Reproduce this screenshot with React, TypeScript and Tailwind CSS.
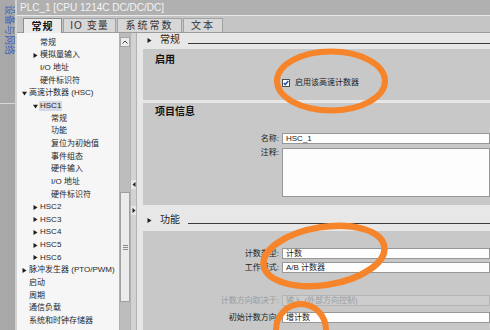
import type { ReactNode } from 'react'

type TreeItem = { label: string; level: 0 | 1 | 2; arrow?: 'right' | 'down'; selected?: boolean }

const treeItems: TreeItem[] = [
  { label: '常规', level: 1 },
  { label: '模拟量输入', level: 1, arrow: 'right' },
  { label: 'I/O 地址', level: 1 },
  { label: '硬件标识符', level: 1 },
  { label: '高速计数器 (HSC)', level: 0, arrow: 'down' },
  { label: 'HSC1', level: 1, arrow: 'down', selected: true },
  { label: '常规', level: 2 },
  { label: '功能', level: 2 },
  { label: '复位为初始值', level: 2 },
  { label: '事件组态', level: 2 },
  { label: '硬件输入', level: 2 },
  { label: 'I/O 地址', level: 2 },
  { label: '硬件标识符', level: 2 },
  { label: 'HSC2', level: 1, arrow: 'right' },
  { label: 'HSC3', level: 1, arrow: 'right' },
  { label: 'HSC4', level: 1, arrow: 'right' },
  { label: 'HSC5', level: 1, arrow: 'right' },
  { label: 'HSC6', level: 1, arrow: 'right' },
  { label: '脉冲发生器 (PTO/PWM)', level: 0, arrow: 'right' },
  { label: '启动', level: 0 },
  { label: '周期', level: 0 },
  { label: '通信负载', level: 0 },
  { label: '系统和时钟存储器', level: 0 },
]

const levelPad = ['pl-[5px]', 'pl-[16px]', 'pl-[27px]']

function Arrow({ dir }: { dir: 'right' | 'down' }) {
  return (
    <svg width="5" height="5" viewBox="0 0 5 5">
      {dir === 'right'
        ? <polygon points="0.5,0 4.5,2.5 0.5,5" fill="#1e1e1e" />
        : <polygon points="0,0.8 5,0.8 2.5,4.5" fill="#1e1e1e" />}
    </svg>
  )
}

function Input({ children, disabled, className = '' }: { children?: ReactNode; disabled?: boolean; className?: string }) {
  return (
    <div
      className={`ml-[3px] flex-1 border pl-[3px] text-[8px] leading-[9px] ${
        disabled ? 'border-[#b4b4b4] bg-[#cdcdcd] text-[#9c9c9c]' : 'border-[#979797] bg-[#fdfdfd] text-[#1c1c1c]'
      } ${className}`}
    >
      {children}
    </div>
  )
}

function Field({ label, value, disabled }: { label: string; value: string; disabled?: boolean }) {
  return (
    <div className="flex items-center">
      <div className={`w-[136px] shrink-0 text-right text-[8px] leading-[10px] ${disabled ? 'text-[#9c9c9c]' : 'text-[#1c1c1c]'}`}>
        {label}
      </div>
      <Input disabled={disabled} className="h-[11px]">{value}</Input>
    </div>
  )
}

function SectionHeader({ title, className }: { title: string; className: string }) {
  return (
    <div className={`flex items-center pl-[10px] ${className}`}>
      <span className="flex w-[13px] items-center"><Arrow dir="right" /></span>
      <span className="text-[10px] leading-[12px] text-[#1c1c1c]">{title}</span>
      <div className="ml-[8px] mt-[6px] h-px flex-1 bg-[#3a3a3a]" />
    </div>
  )
}

export default function App() {
  return (
    <div className="relative flex h-[330px] w-[490px] overflow-hidden bg-[#e6e6e6] font-['Liberation_Sans','Noto_Sans_CJK_SC',sans-serif]">
      {/* left collapsed portal strip */}
      <div className="flex w-[17px] shrink-0 flex-col border-r-2 border-[#d3d3d3] bg-[#a8a8a8]">
        <div className="mt-[5px] flex justify-center text-[10px] leading-[12px] text-[#3d63b8] [writing-mode:vertical-rl] [text-orientation:sideways]">
          设备与网络
        </div>
        <div className="mt-[48px] h-px bg-[#d6d6d6]" />
      </div>

      <div className="flex min-w-0 flex-1 flex-col">
        <div className="h-[15px] shrink-0 bg-[#b0b0b0] pl-[3px] text-[10px] leading-[15px] text-[#f4f4f4]">
          PLC_1 [CPU 1214C DC/DC/DC]
        </div>

        <div className="flex h-[18px] shrink-0 items-end gap-[1px] border-y border-t-[#e9e9e9] border-b-[#9b9b9b] bg-[#c5c5c5] pl-[6px]">
          <div className="-mb-px flex h-[15px] w-[39px] items-center justify-center border border-b-0 border-[#8c8c8c] bg-[#ececec] text-[10px] font-bold tracking-[1px] text-[#111]">
            常规
          </div>
          <div className="flex h-[14px] w-[53px] items-center justify-center border border-b-0 border-[#a2a2a2] bg-[#d7d7d7] text-[10px] tracking-[1px] text-[#333]">
            IO 变量
          </div>
          <div className="flex h-[14px] w-[65px] items-center justify-center border border-b-0 border-[#a2a2a2] bg-[#d7d7d7] text-[10px] tracking-[2px] text-[#333]">
            系统常数
          </div>
          <div className="flex h-[14px] w-[40px] items-center justify-center border border-b-0 border-[#a2a2a2] bg-[#d7d7d7] text-[10px] tracking-[2px] text-[#333]">
            文本
          </div>
        </div>

        <div className="flex min-h-0 flex-1">
          {/* navigation tree */}
          <div className="w-[102px] shrink-0 overflow-hidden bg-[#f6f6f6] pt-[3.5px] text-[8px] leading-none text-[#262626]">
            {treeItems.map((item, i) => (
              <div key={i} className={`flex h-[12.65px] items-center whitespace-nowrap ${levelPad[item.level]}`}>
                <span className="flex w-[7px] items-center">{item.arrow && <Arrow dir={item.arrow} />}</span>
                <span className={item.selected ? '-ml-[1px] bg-[#d3d9e9] px-[1px] py-[1px]' : ''}>{item.label}</span>
              </div>
            ))}
          </div>

          {/* scrollbar */}
          <div className="flex w-[11px] shrink-0 flex-col border-l border-[#b0b0b0] bg-[#bdbdbd]">
            <div className="mt-[4px] flex h-[10px] items-center justify-center border border-[#a6a6a6] bg-[#ececec]">
              <svg width="6" height="4" viewBox="0 0 6 4">
                <polyline points="0.5,3.5 3,1 5.5,3.5" fill="none" stroke="#444" strokeWidth="1" />
              </svg>
            </div>
            <div className="h-[145px]" />
            <div className="flex h-[110px] flex-col items-center justify-center gap-[1px] border border-[#a0a0a0] bg-[#ebebeb]">
              <div className="h-px w-[5px] bg-[#8a8a8a]" />
              <div className="h-px w-[5px] bg-[#8a8a8a]" />
              <div className="h-px w-[5px] bg-[#8a8a8a]" />
            </div>
          </div>

          {/* splitter */}
          <div className="flex w-[7px] shrink-0 flex-col items-center border-x border-[#b3b3b3] bg-[#d2d2d2]">
            <div className="mt-[147px] flex h-[9px] w-[5px] items-center justify-center bg-[#e6e6e6]">
              <svg width="4" height="5" viewBox="0 0 4 5"><polygon points="3.5,0 0.5,2.5 3.5,5" fill="#222" /></svg>
            </div>
            <div className="mt-[17px] flex h-[9px] w-[5px] items-center justify-center bg-[#e6e6e6]">
              <svg width="4" height="5" viewBox="0 0 4 5"><polygon points="0.5,0 3.5,2.5 0.5,5" fill="#222" /></svg>
            </div>
          </div>

          {/* property content */}
          <div className="flex min-w-0 flex-1 flex-col bg-[#e7e7e7]">
            <SectionHeader title="常规" className="h-[16px] pb-[2px]" />

            <div className="ml-[6px] h-[51px] shrink-0 bg-[#c8c8c8] pt-[5px]">
              <div className="pl-[12px] text-[10px] font-bold leading-[12px] text-[#111]">启用</div>
              <div className="mt-[12px] flex h-[10px] items-center pl-[139px]">
                <svg width="8" height="8" viewBox="0 0 8 8">
                  <rect x="0.5" y="0.5" width="7" height="7" fill="#fff" stroke="#4d4d4d" />
                  <polyline points="1.8,4 3.3,5.6 6.3,2" fill="none" stroke="#2456a8" strokeWidth="1.6" />
                </svg>
                <span className="ml-[5px] text-[8px] leading-[10px] text-[#1c1c1c]">启用该高速计数器</span>
              </div>
            </div>

            <div className="ml-[6px] mt-[3px] h-[102px] shrink-0 bg-[#c8c8c8] pt-[3px]">
              <div className="pl-[12px] text-[10px] font-bold leading-[12px] text-[#111]">项目信息</div>
              <div className="mt-[15px]">
                <Field label="名称:" value="HSC_1" />
              </div>
              <div className="mt-[4px] flex items-start">
                <div className="w-[136px] shrink-0 text-right text-[8px] leading-[10px] text-[#1c1c1c]">注释:</div>
                <Input className="h-[49px]" />
              </div>
            </div>

            <SectionHeader title="功能" className="h-[26px] pt-[4px]" />

            <div className="ml-[6px] flex-1 bg-[#c8c8c8] pt-[17px]">
              <Field label="计数类型:" value="计数" />
              <div className="mt-[3px]">
                <Field label="工作模式:" value="A/B 计数器" />
              </div>
              <div className="mt-[22px]">
                <Field label="计数方向取决于:" value="输入 (外部方向控制)" disabled />
              </div>
              <div className="mt-[6px]">
                <Field label="初始计数方向:" value="增计数" />
              </div>
            </div>
          </div>
        </div>
      </div>

      {/* hand-drawn annotation marks */}
      <svg className="pointer-events-none absolute left-0 top-0" width="490" height="330" viewBox="0 0 490 330">
        <ellipse cx="331" cy="81" rx="54" ry="29.5" fill="none" stroke="#f5842a" strokeWidth="6" />
        <ellipse cx="324" cy="256" rx="61" ry="29" transform="rotate(-9 324 256)" fill="none" stroke="#f5842a" strokeWidth="6.5" />
        <ellipse cx="301" cy="330" rx="25" ry="26" fill="none" stroke="#f5842a" strokeWidth="6" />
      </svg>
    </div>
  )
}
